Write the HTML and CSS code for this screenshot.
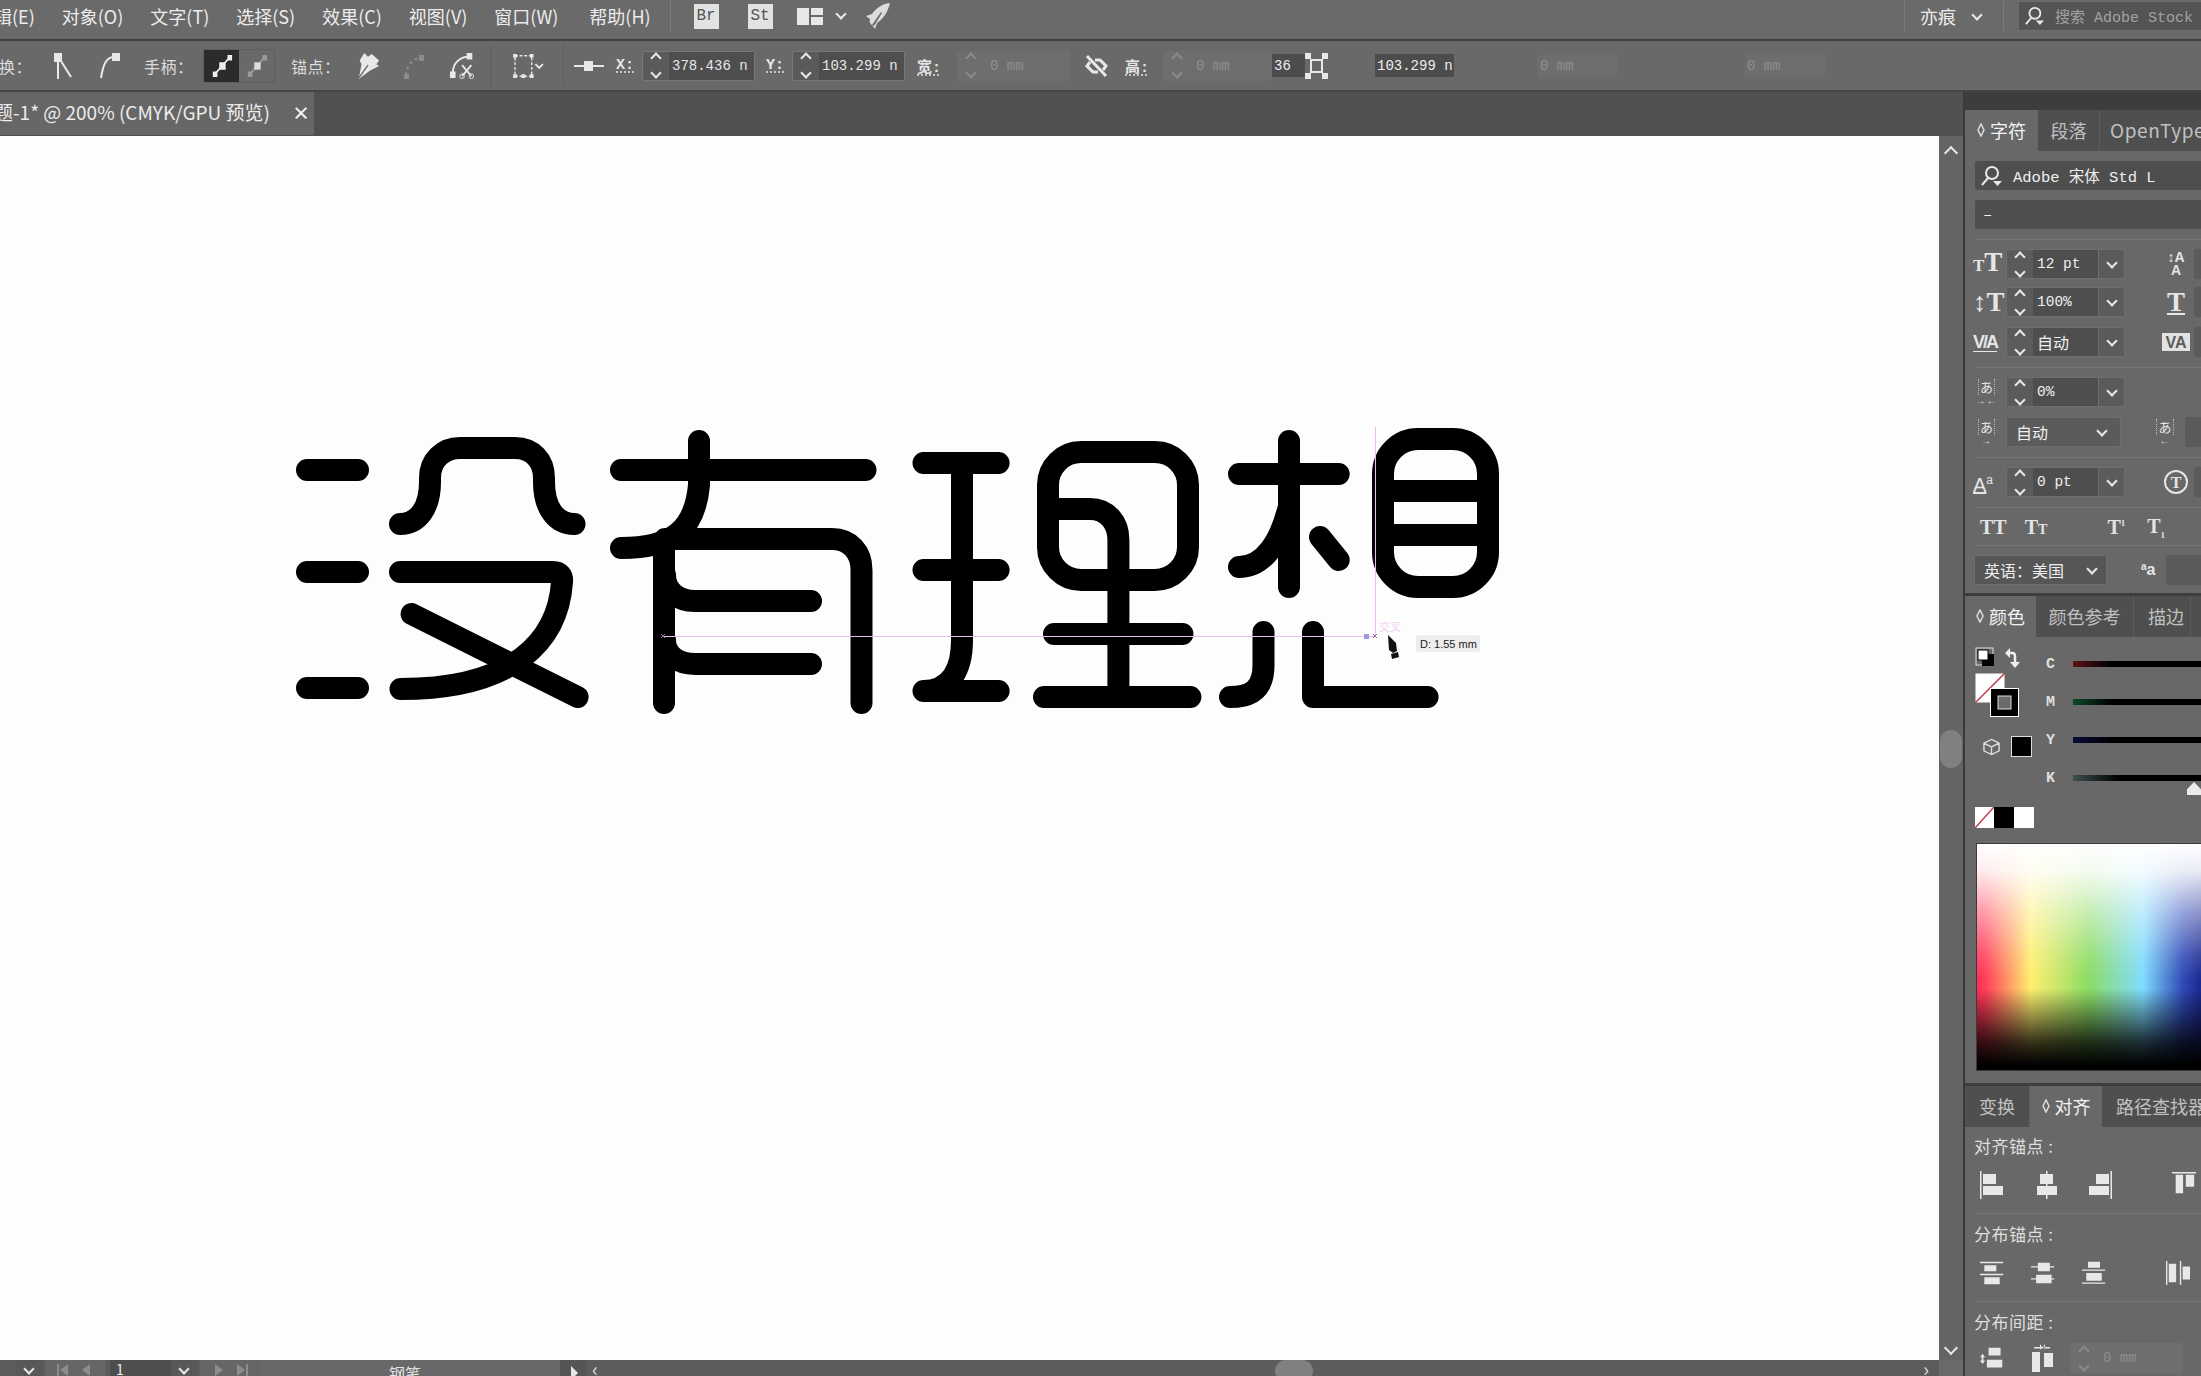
FILE: index.html
```html
<!DOCTYPE html>
<html lang="zh">
<head>
<meta charset="utf-8">
<title>Illustrator</title>
<link rel="stylesheet" href="styles.css">
</head>
<body>
<header class="menubar">
  <nav class="menus">
    <span class="menu first">辑(E)</span><span class="menu">对象(O)</span><span class="menu">文字(T)</span><span class="menu">选择(S)</span><span class="menu">效果(C)</span><span class="menu">视图(V)</span><span class="menu">窗口(W)</span><span class="menu last">帮助(H)</span>
  </nav>
  <i class="vsep vsep-menu"></i>
  <span class="appbadge">Br</span>
  <span class="appbadge badge-st">St</span>
  <svg class="layout-ico" viewBox="0 0 26 17"><path fill="#e8e8e8" d="M0 0h12v17H0zM14 0h12v7H14zM14 9h12v8H14z"/></svg>
  <i class="chev chev-menu"></i>
  <svg class="rocket" viewBox="0 0 26 26"><path fill="#dcdcdc" d="M25 0C17 1 11 5 7 11l-6 2 4 3c-1 3 0 5 2 6l3 4 2-6c6-4 11-11 13-20z"/><path fill="#6a6a6a" d="M7 22 16 9l1 1-8 13z"/></svg>
  <div class="menu-right">
    <i class="vsep"></i>
    <span class="user">亦痕</span>
    <i class="chev chev-user"></i>
    <i class="vsep vsep-user"></i>
    <div class="stocksearch">
      <svg class="search-ico" viewBox="0 0 22 22"><circle cx="12" cy="8" r="6" fill="none" stroke="#e8e8e8" stroke-width="2"/><path stroke="#e8e8e8" stroke-width="2" d="M8 13 2 20"/><path fill="#e8e8e8" d="M13 16h9l-4.500 5z"/></svg>
      <span class="stock-text">搜索 Adobe Stock</span>
    </div>
  </div>
</header>

<div class="ctlbar">
  <span class="lbl w36 cut">换：</span>
  <svg class="cicon ml18 w20" viewBox="0 0 20 26"><path fill="#e8e8e8" d="M1 0h8v9H6v17H4V9H1z"/><path stroke="#e8e8e8" stroke-width="2" d="M8 8l10 16"/></svg>
  <svg class="cicon ml25 w22" viewBox="0 0 22 26"><path fill="#e8e8e8" d="M14 0h8v8h-8z"/><path fill="none" stroke="#e8e8e8" stroke-width="2" d="M15 4C8 5 5 12 3 25"/></svg>
  <span class="lbl ml24 w50">手柄：</span>
  <div class="btngroup ml9">
    <span class="gbtn on"><svg viewBox="0 0 24 24"><path stroke="#eee" stroke-width="2" d="M4 21 20 3"/><path fill="#eee" d="M9 8h7v8H9zM2 18h5v6H2zM18 0h5v6h-5z"/></svg></span>
    <span class="gbtn"><svg viewBox="0 0 24 24"><path stroke="#999" stroke-width="2" d="M4 21 20 3"/><path fill="#ddd" d="M9 8h7v8H9z"/><path fill="#999" d="M2 18h5v6H2zM18 0h5v6h-5z"/></svg></span>
  </div>
  <span class="lbl ml16 w48">锚点：</span>
  <svg class="cicon ml16 w26" viewBox="0 0 26 28"><path fill="#e8e8e8" d="M9 0 13 4 17 1 25 8 22 12 25 14 15 19 3 28 6 12 4 8zM8 0"/><path stroke="#686868" stroke-width="1.500" d="M3 27 13 13"/></svg>
  <svg class="cicon ml22 w22" viewBox="0 0 22 26"><path fill="none" stroke="#8c8c8c" stroke-width="2" stroke-dasharray="3 3" d="M3 22C4 12 9 6 18 5"/><path fill="#8c8c8c" d="M16 2h5v6h-5zM1 21h5v5H1z"/></svg>
  <svg class="cicon ml24 w28" viewBox="0 0 28 28"><path fill="none" stroke="#e8e8e8" stroke-width="2" d="M3 22C3 12 9 5 19 4"/><path fill="#e8e8e8" d="M18 0h6v7h-6zM0 20h6v7H0z"/><path stroke="#e8e8e8" stroke-width="2" d="m13 13 10 12M23 13 13 25"/><circle cx="13" cy="25" r="2.500" fill="none" stroke="#e8e8e8"/><circle cx="23" cy="25" r="2.500" fill="none" stroke="#e8e8e8"/></svg>
  <i class="vsep ctl-sep ml13"></i>
  <svg class="cicon ml20 w34" viewBox="0 0 34 28"><rect x="3" y="3" width="18" height="22" fill="none" stroke="#e8e8e8" stroke-width="1.500" stroke-dasharray="3 2"/><path fill="#e8e8e8" d="M1 1h4v4H1zM19 1h4v4h-4zM1 23h4v4H1zM19 23h4v4h-4zM10 23h4v4h-4z"/><path fill="none" stroke="#e8e8e8" stroke-width="2" d="m25 12 4 4 4-4"/></svg>
  <i class="vsep ctl-sep ml18"></i>
  <svg class="cicon ml10 w30" viewBox="0 0 30 12"><path fill="#e8e8e8" d="M0 5h10V1h9v4h11v2H19v4h-9V7H0z"/></svg>
  <span class="lbl-u ml12 w17">X:</span>
  <div class="numfield ml9"><span class="spin"><i class="chev up"></i><i class="chev"></i></span><span class="numval">378.436 n</span></div>
  <span class="lbl-u ml11 w16">Y:</span>
  <div class="numfield ml10"><span class="spin"><i class="chev up"></i><i class="chev"></i></span><span class="numval">103.299 n</span></div>
  <span class="lbl-u ml12 w32">宽:</span>
  <div class="numfield dis ml8"><span class="spin"><i class="chev up"></i><i class="chev"></i></span><span class="numval">0 mm</span></div>
  <svg class="cicon ml15 w23" viewBox="0 0 23 22"><path fill="none" stroke="#e8e8e8" stroke-width="3" d="M5 7 2 11l6 6h5M18 15l3-4-6-6h-5M2 1l19 20"/></svg>
  <span class="lbl-u ml17 w30">高:</span>
  <div class="numfield dis w109 ml8"><span class="spin"><i class="chev up"></i><i class="chev"></i></span><span class="numval">0 mm</span></div>
  <span class="darkval w33">36 </span>
  <svg class="cicon w23" viewBox="0 0 23 26"><rect x="6" y="7" width="11" height="12" fill="none" stroke="#e8e8e8" stroke-width="2"/><path fill="#e8e8e8" d="M0 0h6v6H0zM17 0h6v6h-6zM0 20h6v6H0zM17 20h6v6h-6z"/></svg>
  <span class="darkval ml47 w79">103.299 n</span>
  <span class="ghostval ml84 w79">0 mm</span>
  <span class="ghostval ml128 w80">0 mm</span>
</div>

<div class="work">
  <div class="docarea">
    <div class="tabstrip">
      <div class="doctab"><span class="doctitle">题-1* @ 200% (CMYK/GPU 预览)</span><span class="docclose">×</span></div>
    </div>
    <div class="docbody">
      <main class="canvas">
        <svg class="art" viewBox="0 136 1939 1224" role="img" aria-label="没有理想">
          <g class="letter">
            <path d="M307 470H358M307 572H358M307 688H358"/>
            <path d="M400 524C418 524 430 508 430 482V478C430 460 443 448 460 448H515C532 448 544 460 544 478V482C544 508 556 524 574.500 524"/>
            <path d="M400 572H553Q563 572 562 582C558 640 515 689 400.500 689"/>
            <path d="M411.600 614 577.600 697"/>
            <path d="M621 470H865.500"/>
            <path d="M699 441V485C695 530 672 548 621 548"/>
            <path d="M664 550V703"/>
            <path d="M665 539H832C850 539 861.500 552 861.500 570V703"/>
            <path d="M665 575C665 591 678 601 695 601H811M665 640C665 655 678 664 695 664H811"/>
            <path d="M923.500 463H998.600M923.500 570H998.600"/>
            <path d="M962 463V640C962 670 950 691 923.500 691H998.600"/>
            <rect x="1048" y="452" width="140" height="128" rx="33" ry="33"/>
            <path d="M1048 509H1090C1107 509 1118.400 522 1118.400 540V697"/>
            <path d="M1054 634H1182.500M1044 697H1190.400"/>
            <path d="M1239 474H1338.700M1289 441V587"/>
            <path d="M1288 510C1280 540 1265 567 1239 567"/>
            <path d="M1320 537 1338.700 560"/>
            <rect x="1383" y="439" width="105" height="148" rx="35" ry="35"/>
            <path d="M1383 491H1488M1383 535H1488"/>
            <path d="M1263.500 632V665C1263.500 690 1250 697 1230 697"/>
            <path d="M1313 632V697H1427.600"/>
          </g>
          <path class="guide" d="M663 636.500H1376M1375.500 427V636"/>
          <rect class="anchor" x="1364" y="634" width="5" height="5"/>
          <path class="cross" d="m661 634 4 4m0-4-4 4M1373 634l4 4m0-4-4 4"/>
          <text class="hint" x="1379" y="631">交叉</text>
          <path class="pen" d="M1388 635l8 8 1 8-4 2-4-3zM1391 654l7-2 1 5-7 2z"/>
          <rect class="tip" x="1416" y="635" width="64" height="17" rx="3"/>
          <text class="tiptext" x="1420" y="648">D: 1.55 mm</text>
        </svg>
      </main>
      <aside class="vscroll">
        <i class="chev up sc-up"></i>
        <i class="vthumb"></i>
        <i class="chev sc-down"></i>
      </aside>
    </div>
    <footer class="status">
      <span class="st-a"><i class="chev"></i></span>
      <span class="st-b">
        <svg viewBox="0 0 40 14"><path fill="#8c8c8c" d="M2 1h2v12H2zM13 1v12L5 7zM35 1v12l-8-6z"/></svg>
      </span>
      <span class="st-input">1</span>
      <span class="st-a st-dark"><i class="chev"></i></span>
      <span class="st-b st-b2">
        <svg viewBox="0 0 40 14"><path fill="#8c8c8c" d="M5 1v12l8-6zM27 1v12l8-6zM36 1h2v12h-2z"/></svg>
      </span>
      <span class="st-tool">钢笔</span>
      <span class="st-arrow"><svg viewBox="0 0 10 16"><path fill="#e6e6e6" d="M1 0v16l8-8z"/></svg></span>
      <div class="hscroll">
        <span class="hs-l">‹</span>
        <i class="hthumb"></i>
        <span class="hs-r">›</span>
      </div>
      <span class="st-corner"></span>
    </footer>
  </div>

  <div class="dock">
    <section class="panel p-char">
      <div class="ptabs">
        <span class="ptab on w73"><svg class="updown" viewBox="0 0 8 14"><path fill="none" stroke="#ddd" stroke-width="1.500" d="M4 1 7 7 4 13 1 7z"/></svg>字符</span><span class="ptab w62">段落</span><span class="ptab wide">OpenType</span>
      </div>
      <div class="pbody">
        <div class="field f-font">
          <svg class="search-ico" viewBox="0 0 22 22"><circle cx="12" cy="8" r="6" fill="none" stroke="#e8e8e8" stroke-width="2"/><path stroke="#e8e8e8" stroke-width="2" d="M8 13 2 20"/><path fill="#e8e8e8" d="M13 16h9l-4.500 5z"/></svg>
          <span class="mono">Adobe 宋体 Std L</span>
        </div>
        <div class="field f-style"><span class="mono">–</span></div>
        <hr class="sep">
        <div class="row">
          <span class="ri big-t"><small>T</small>T</span>
          <div class="combo"><span class="spin"><i class="chev up"></i><i class="chev"></i></span><span class="cval mono">12 pt</span><span class="cdrop"><i class="chev"></i></span></div>
          <span class="ri2 stack">↕A<br>A</span><span class="stub"></span>
        </div>
        <div class="row">
          <span class="ri big-t">↕T</span>
          <div class="combo"><span class="spin"><i class="chev up"></i><i class="chev"></i></span><span class="cval mono">100%</span><span class="cdrop"><i class="chev"></i></span></div>
          <span class="ri2 big-t under">T</span><span class="stub"></span>
        </div>
        <div class="row row-mt">
          <span class="ri va">V/A</span>
          <div class="combo"><span class="spin"><i class="chev up"></i><i class="chev"></i></span><span class="cval">自动</span><span class="cdrop"><i class="chev"></i></span></div>
          <span class="ri2 va-box">VA</span><span class="stub"></span>
        </div>
        <hr class="sep">
        <div class="row">
          <span class="ri kana"><b>あ</b><em>→←</em></span>
          <div class="combo"><span class="spin"><i class="chev up"></i><i class="chev"></i></span><span class="cval mono">0%</span><span class="cdrop"><i class="chev"></i></span></div>
        </div>
        <div class="row row-mt">
          <span class="ri kana"><b>あ</b><em>→</em></span>
          <div class="select s-auto"><span>自动</span><i class="chev"></i></div>
          <span class="ri2 kana kana-r"><b>あ</b><em>←</em></span><span class="stub"></span>
        </div>
        <hr class="sep">
        <div class="row">
          <span class="ri aa"><u>A</u><sup>a</sup></span>
          <div class="combo"><span class="spin"><i class="chev up"></i><i class="chev"></i></span><span class="cval mono">0 pt</span><span class="cdrop"><i class="chev"></i></span></div>
          <span class="ri2 rot">T</span><span class="stub"></span>
        </div>
        <hr class="sep">
        <div class="types"><span>TT</span><span class="ty2">T<small>T</small></span><span class="ty3">T<sup>1</sup></span><span class="ty4">T<sub>1</sub></span></div>
        <hr class="sep sep-tight">
        <div class="row">
          <div class="select s-lang"><span>英语：美国</span><i class="chev"></i></div>
          <span class="ri3"><small>a</small>a</span><span class="stub stub-wide"></span>
        </div>
      </div>
    </section>

    <section class="panel p-color">
      <div class="ptabs">
        <span class="ptab on w71"><svg class="updown" viewBox="0 0 8 14"><path fill="none" stroke="#ddd" stroke-width="1.500" d="M4 1 7 7 4 13 1 7z"/></svg>颜色</span><span class="ptab w98">颜色参考</span><span class="ptab push">描边</span>
      </div>
      <div class="colorbody">
        <div class="colortop">
          <div class="fillcol">
            <svg class="fillmini" viewBox="0 0 48 22"><rect x="1" y="1" width="17" height="17" fill="none" stroke="#ddd"/><rect x="7" y="7" width="12" height="12" fill="#000"/><rect x="3" y="3" width="10" height="10" fill="#fff" stroke="#000"/><path fill="none" stroke="#eee" stroke-width="2.500" d="M31 6h6q3 0 3 3v8"/><path fill="#eee" d="m35 1-5 5 5 5zM35 15l5 6 5-6z"/></svg>
            <div class="fillstroke">
              <svg viewBox="0 0 44 44"><rect x=".5" y=".5" width="29" height="29" fill="#fff"/><path stroke="#c0394b" stroke-width="1.500" d="M0 30 30 0"/><rect x="15.500" y="15.500" width="28" height="28" fill="#000" stroke="#fff"/><rect x="23" y="23" width="13" height="13" fill="#6a6a6a" stroke="#ddd"/></svg>
            </div>
            <div class="modes">
              <svg viewBox="0 0 18 18"><path fill="none" stroke="#ddd" stroke-width="1.500" d="M9 1 17 5v8l-8 4-8-4V5zM1 5l8 4 8-4M9 9v8"/></svg>
              <span class="blk"></span>
            </div>
          </div>
          <div class="sliders">
            <div class="sl"><b>C</b><i class="bar bar-c"></i></div>
            <div class="sl"><b>M</b><i class="bar bar-m"></i></div>
            <div class="sl"><b>Y</b><i class="bar bar-y"></i></div>
            <div class="sl"><b>K</b><i class="bar bar-k"></i><i class="thumb"></i></div>
          </div>
        </div>
        <div class="swatches"><svg viewBox="0 0 19 21" preserveAspectRatio="none"><rect width="19" height="21" fill="#fff"/><path stroke="#c0394b" stroke-width="1.500" d="M0 21 19 0"/></svg><i class="sw-k"></i><i class="sw-w"></i></div>
        <div class="spectrum"></div>
      </div>
    </section>

    <section class="panel p-align">
      <div class="ptabs">
        <span class="ptab w65">变换</span><span class="ptab on w72"><svg class="updown" viewBox="0 0 8 14"><path fill="none" stroke="#ddd" stroke-width="1.500" d="M4 1 7 7 4 13 1 7z"/></svg>对齐</span><span class="ptab push">路径查找器</span>
      </div>
      <div class="alignbody">
        <div class="alabel">对齐锚点 :</div>
        <div class="airow">
          <svg class="ai" viewBox="0 0 24 28"><path fill="#e8e8e8" d="M0 0h1.500v28H0zM3 3h13v10H3zM3 15h20v9H3z"/></svg>
          <svg class="ai a2" viewBox="0 0 24 28"><path fill="#e8e8e8" d="M11 0h1.500v28H11zM5 3h13v10H5zM2 15h20v9H2z"/></svg>
          <svg class="ai a3" viewBox="0 0 24 28"><path fill="#e8e8e8" d="M22.500 0h1.500v28h-1.500zM8 3h13v10H8zM1 15h20v9H1z"/></svg>
          <svg class="ai a4" viewBox="0 0 26 28"><path fill="#e8e8e8" d="M0 0h26v1.500H0zM4 3h8v20H4zM15 3h9v13h-9z"/></svg>
        </div>
        <hr class="sep asep">
        <div class="alabel">分布锚点 :</div>
        <div class="airow">
          <svg class="ai" viewBox="0 0 28 26"><path fill="#e8e8e8" d="M0 0h27v1.500H0zM5 4h14v7H5zM0 14h27v1.500H0zM5 18h18v8H5z"/></svg>
          <svg class="ai a2b" viewBox="0 0 28 26"><path fill="#e8e8e8" d="M0 5h27v1.500H0zM8 1h14v10H8zM0 19h27v1.500H0zM6 15h18v10H6z"/></svg>
          <svg class="ai a3b" viewBox="0 0 28 26"><path fill="#e8e8e8" d="M7 0h14v7H7zM0 9h27v1.500H0zM5 13h18v9H5zM0 24h27v1.500H0z"/></svg>
          <svg class="ai a4b" viewBox="0 0 26 26"><path fill="#e8e8e8" d="M0 0h1.500v26H0zM3 3h8v20H3zM15 0h1.500v26H15zM18 6h8v14h-8z"/></svg>
        </div>
        <hr class="sep asep">
        <div class="alabel">分布间距 :</div>
        <div class="airow airow-last">
          <svg class="ai" viewBox="0 0 28 26"><path fill="#e8e8e8" d="M10 1h14v9H10zM8 15h18v9H8zM3 8 6 12H0zM3 20 6 16H0zM2 12h2v4H2z"/></svg>
          <svg class="ai a2c" viewBox="0 0 24 28"><path fill="#e8e8e8" d="M1 8h8v20H1zM13 9h9v14h-9zM3 3h16v1.500H3zM9 0l2 3-2 3zM14 0l-2 3 2 3z"/></svg>
          <div class="numfield dis gapfield"><span class="spin"><i class="chev up"></i><i class="chev"></i></span><span class="numval">0 mm</span></div>
        </div>
      </div>
    </section>
  </div>
</div>
</body>
</html>
```

FILE: styles.css
```css
*{box-sizing:border-box}
html,body{margin:0;padding:0}
body{width:2201px;height:1376px;overflow:hidden;display:flex;flex-direction:column;background:#696969;color:#e4e4e4;font-family:"Noto Sans CJK SC","Noto Sans",sans-serif;font-size:16px}
i{display:block;font-style:normal}
svg{display:block;flex:none}

.chev{width:8px;height:8px;border-right:2px solid #e8e8e8;border-bottom:2px solid #e8e8e8;transform:rotate(45deg);flex:none}
.chev.up{transform:rotate(-135deg)}
.vsep{width:1px;height:30px;background:#7c7c7c;flex:none}

/* menu bar */
.menubar{height:41px;flex:none;display:flex;align-items:center;background:#6a6a6a;border-bottom:2px solid #404040;padding-bottom:7px;overflow:hidden}
.menus{display:flex;gap:27px;font-size:18px;color:#ececec;flex:none}
.menu{white-space:nowrap}
.menu.first{margin-left:-6px}
.menu.last{margin-left:4px}
.vsep-menu{margin-left:19px}
.appbadge{width:25px;height:25px;margin-left:23px;background:#e2e2e2;color:#555;font:16px "Liberation Mono",monospace;display:flex;align-items:center;justify-content:center;flex:none}
.badge-st{margin-left:29px}
.layout-ico{width:26px;height:17px;margin-left:24px}
.chev-menu{margin-left:14px;margin-top:-5px}
.rocket{width:26px;height:26px;margin-left:20px}
.menu-right{margin-left:auto;display:flex;align-items:center;height:100%}
.user{font-size:18px;margin-left:15px;color:#eee}
.chev-user{margin-left:17px;margin-top:-2px}
.vsep-user{margin-left:22px}
.stocksearch{width:183px;height:30px;margin-left:14px;background:#545454;border:1px solid #6e6e6e;border-right:0;display:flex;align-items:center;padding-left:5px;overflow:hidden}
.stocksearch .search-ico{width:20px;height:20px}
.stock-text{font:15px "Liberation Mono","Noto Sans CJK SC",monospace;color:#a2a2a2;margin-left:11px;white-space:nowrap}

/* control bar */
.ctlbar{height:51px;flex:none;display:flex;align-items:center;background:#696969;border-bottom:2px solid #454545;overflow:hidden;white-space:nowrap}
.lbl{font-size:16px;color:#dcdcdc;flex:none;letter-spacing:.5px}
.cut{margin-left:-1px}
.lbl-u{font:bold 15px "Liberation Mono","Noto Sans CJK SC",monospace;color:#e6e6e6;text-decoration:underline dotted;text-underline-offset:3px;flex:none}
.cicon{height:26px;flex:none}
.ctl-sep{height:42px;background:#5e5e5e}
.w16{width:16px}.w17{width:17px}.w20{width:20px}.w22{width:22px}.w23{width:23px}.w26{width:26px}.w28{width:28px}.w30{width:30px}.w32{width:32px}.w33{width:33px}.w34{width:34px}.w36{width:36px}.w48{width:48px}.w50{width:50px}.w79{width:79px}.w80{width:80px}
.ml8{margin-left:8px}.ml9{margin-left:9px}.ml10{margin-left:10px}.ml11{margin-left:11px}.ml12{margin-left:12px}.ml13{margin-left:13px}.ml15{margin-left:15px}.ml16{margin-left:16px}.ml17{margin-left:17px}.ml18{margin-left:18px}.ml20{margin-left:20px}.ml22{margin-left:22px}.ml24{margin-left:24px}.ml25{margin-left:25px}.ml47{margin-left:47px}.ml84{margin-left:84px}.ml128{margin-left:128px}
.btngroup{width:72px;height:34px;display:flex;border:1px solid #5e5e5e;border-radius:2px;flex:none}
.gbtn{flex:1;display:flex;align-items:center;justify-content:center}
.gbtn svg{width:22px;height:22px}
.gbtn.on{background:#2b2b2b}
.numfield{width:113px;height:30px;display:flex;background:#5a5a5a;border:1px solid #777;border-radius:2px;flex:none;overflow:hidden}
.spin{width:26px;flex:none;display:flex;flex-direction:column;align-items:center;justify-content:center;gap:7px}
.spin .chev{width:8px;height:8px;border-width:2px}
.numval{flex:1;background:#4e4e4e;font:14px "Liberation Mono",monospace;color:#e6e6e6;display:flex;align-items:center;padding-left:3px;overflow:hidden;white-space:nowrap}
.numfield.dis{background:#6e6e6e;border-color:#6e6e6e}
.numfield.dis .numval{background:#6e6e6e;color:#8e8e8e;padding-left:6px}
.numfield.dis .chev{border-color:#8a8a8a}
.w109{width:109px}
.darkval{height:23px;background:#4c4c4c;font:14px "Liberation Mono",monospace;color:#eee;display:flex;align-items:center;padding-left:2px;flex:none;white-space:nowrap}
.ghostval{height:22px;background:#6e6e6e;color:#8e8e8e;font:14px "Liberation Mono",monospace;display:flex;align-items:center;padding-left:2px;flex:none}

/* workspace */
.work{flex:1;min-height:0;display:flex}
.docarea{width:1963px;flex:none;display:flex;flex-direction:column}
.tabstrip{height:44px;flex:none;background:#505050}
.doctab{width:314px;height:43px;background:#666;display:flex;align-items:center;padding-bottom:4px;overflow:hidden}
.doctitle{font-size:19px;color:#ececec;white-space:nowrap;margin-left:-6px;flex:none}
.docclose{margin-left:22px;font-size:18px;color:#f4f4f4;font-weight:bold}
.docbody{flex:1;min-height:0;display:flex}
.canvas{flex:1;min-width:0;background:#fdfdfd}
.art{width:1939px;height:1224px}
.letter{fill:none;stroke:#000;stroke-width:22;stroke-linecap:round;stroke-linejoin:round}
.guide{stroke:#f0b8f0;stroke-width:1;fill:none}
.anchor{fill:#9a9ae0}
.cross{stroke:#8a6a9a;stroke-width:1;fill:none}
.hint{font-size:11px;fill:#f4d0f4;font-family:"Noto Sans CJK SC",sans-serif}
.pen{fill:#111}
.tip{fill:#ededed}
.tiptext{font:11px "Liberation Sans",sans-serif;fill:#222}
.vscroll{width:24px;flex:none;background:#646464;display:flex;flex-direction:column;align-items:center}
.sc-up{margin-top:12px;width:10px;height:10px}
.vthumb{width:22px;height:38px;margin-top:572px;background:#808080;border-radius:11px}
.sc-down{margin-top:575px;width:10px;height:10px}
.status{height:16px;flex:none;display:flex;background:#5c5c5c;overflow:hidden}
.st-a{width:26px;margin-left:16px;background:#585858;display:flex;justify-content:center;padding-top:5px}
.st-a .chev{width:8px;height:8px}
.st-dark{margin-left:0}
.st-b{width:60px;margin-left:3px;background:#666;padding-top:3px;padding-left:0}
.st-b svg{width:40px;height:14px;margin-left:10px}
.st-b2{margin-left:3px}
.st-input{width:61px;margin-left:5px;background:#4e4e4e;font-size:14px;line-height:18px;padding-left:6px;color:#eee}
.st-tool{width:300px;background:#686868;text-align:center;font-size:16px;line-height:26px;color:#e4e4e4;padding-right:10px}
.st-arrow{width:26px;background:#555;padding:6px 0 0 10px}
.st-arrow svg{width:9px;height:14px}
.hscroll{flex:1;display:flex;background:#5c5c5c;padding-left:6px;color:#ddd;font-size:20px;line-height:18px}
.hthumb{width:38px;height:22px;margin-left:677px;background:#808080;border-radius:16px}
.hs-r{margin-left:610px}
.st-corner{width:24px;background:#6a6a6a}

/* dock */
.dock{flex:1;min-width:0;background:#3d3d3d;padding-top:18px;display:flex;flex-direction:column;gap:3px;border-left:2px solid #3a3a3a;overflow:hidden}
.panel{background:#686868;width:236px;flex:none;overflow:hidden}
.p-char{height:483px}
.p-color{height:487px}
.p-align{flex:1}
.ptabs{height:41px;display:flex;background:#4f4f4f;font-size:18px;color:#c0c0c0;white-space:nowrap;padding-bottom:0}
.ptab{display:flex;align-items:center;justify-content:center;padding:0 6px 2px;border-right:1px solid #5c5c5c;flex:none}
.ptab.on{background:#686868;color:#f2f2f2;border-right:0}
.ptab.wide{padding-left:10px;font-size:19px;letter-spacing:.6px}
.ptab.push{padding-left:14px}
.updown{width:8px;height:14px;margin-right:5px;flex:none}
.w62{width:62px}.w65{width:65px}.w71{width:71px}.w72{width:72px}.w73{width:73px}.w98{width:98px}
.pbody{padding:10px 0 0 10px}
.field{height:29px;width:300px;background:#4e4e4e;border-radius:2px;display:flex;align-items:center;padding-left:4px;white-space:nowrap}
.field .search-ico{width:24px;height:22px;margin-right:10px}
.f-style{margin-top:10px;padding-left:8px}
.mono{font:15.5px "Liberation Mono","Noto Sans CJK SC",monospace;color:#eee;white-space:pre}
.sep{border:0;height:1px;margin:10px 0 9px;background:#757575;width:300px}
.sep-tight{margin:8px 0 9px}
.row{height:30px;display:flex;align-items:center}
.row + .row{margin-top:8px}
.row + .row.row-mt{margin-top:10px}
.ri{width:31px;flex:none;font:bold 27px "Liberation Serif",serif;color:#e6e6e6;white-space:nowrap;line-height:30px;margin-left:-2px;margin-right:2px}
.ri small{font-size:17px}
.ri2{width:28px;margin-left:37px;flex:none;text-align:center;color:#e6e6e6;font:bold 27px "Liberation Serif",serif;line-height:30px}
.stack{font:bold 14px/13px "Liberation Sans",sans-serif}
.under{text-decoration:underline;line-height:26px}
.va{font:bold 18px "Liberation Sans",sans-serif;letter-spacing:-2px;text-decoration:underline;text-underline-offset:3px}
.va-box{font:bold 16px/20px "Liberation Sans",sans-serif;background:#e2e2e2;color:#5a5a5a;height:18px}
.kana{display:flex;flex-direction:column;align-items:center;font:10px/11px "Liberation Sans",sans-serif;padding-right:4px}
.kana b{font:13px/16px "Noto Sans CJK JP",sans-serif;border:1px dotted #bbb;border-width:0 1px;padding:0 1px}
.kana em{font-style:normal;letter-spacing:1px}
.kana-r{margin-left:32px}
.aa{font:20px/30px "Liberation Sans",sans-serif}
.aa sup{font-size:12px}
.rot{width:24px;height:24px;line-height:22px;border:2px solid #e6e6e6;border-radius:50%;font-size:16px;margin-left:39px;margin-right:2px}
.combo{width:119px;height:30px;display:flex;background:#5b5b5b;border:1px solid #6e6e6e;border-radius:2px;flex:none}
.cval{width:65px;background:#4e4e4e;display:flex;align-items:center;padding-left:4px;font-size:16px;color:#eee}
.cval.mono{font-size:14.5px}
.cdrop{flex:1;display:flex;justify-content:center;align-items:center;padding-bottom:3px;border-left:1px solid #6e6e6e}
.stub{width:40px;height:30px;margin-left:4px;background:#5b5b5b;flex:none;border-radius:2px}
.select{height:30px;background:#5b5b5b;border:1px solid #6e6e6e;border-radius:2px;display:flex;align-items:center;justify-content:space-between;flex:none;font-size:17px;color:#eee;padding:0 14px 0 9px}
.select .chev{margin-top:-3px}
.s-auto{width:115px;font-size:16px}
.s-lang{width:133px;margin-left:-1px;font-size:16px;padding:0 10px 0 9px;background:#565656}
.types{height:20px;display:flex;align-items:center;font:bold 20px "Liberation Serif",serif;color:#e4e4e4;padding-left:5px}
.types small{font-size:14px}
.types sup,.types sub{font-size:9px}
.ty2{margin-left:18px}
.ty3{margin-left:60px}
.ty4{margin-left:22px}
.ri3{margin-left:34px;width:20px;font:bold 16px "Liberation Sans",sans-serif;color:#e6e6e6}
.ri3 small{font-size:10px;vertical-align:top}
.stub-wide{margin-left:11px;width:80px}

/* colour */
.colorbody{padding:10px 0 0 10px}
.colortop{display:flex;height:158px}
.fillcol{width:62px;flex:none}
.fillmini{width:48px;height:22px}
.fillstroke{margin-top:4px}
.fillstroke svg{width:44px;height:44px}
.modes{display:flex;align-items:center;margin-top:19px;padding-left:8px;gap:11px}
.modes svg{width:17px;height:18px}
.blk{width:21px;height:21px;background:#000;border:1px solid #ddd}
.sliders{flex:1;padding:6px 0 0 9px;display:flex;flex-direction:column;gap:16px;position:relative}
.sl{height:22px;display:flex;align-items:center;position:relative}
.sl b{width:27px;font:bold 15px "Liberation Mono",monospace;color:#e0e0e0}
.bar{flex:1;height:6px}
.bar-c{background:linear-gradient(90deg,#5c1212,#000 30%)}
.bar-m{background:linear-gradient(90deg,#0d4a28,#000 30%)}
.bar-y{background:linear-gradient(90deg,#0b0b3c,#000 30%)}
.bar-k{background:linear-gradient(90deg,#3f5050,#000 35%)}
.thumb{position:absolute;right:0;top:15px;width:14px;height:13px;background:#ececec;clip-path:polygon(50% 0,100% 55%,100% 100%,0 100%,0 55%)}
.swatches{display:flex;height:21px;width:59px;margin-top:2px}
.swatches svg{width:19px;height:21px}
.swatches i{width:20px}
.sw-k{background:#000}
.sw-w{background:#fff}
.spectrum{width:226px;height:228px;margin-top:15px;margin-left:1px;border:1px solid #3a3a3a;background:linear-gradient(to bottom,#fff 0,rgba(255,255,255,.9) 12%,rgba(255,255,255,.5) 30%,rgba(255,255,255,.12) 50%,rgba(255,255,255,0) 60%,rgba(0,0,0,0) 64%,rgba(0,0,0,.8) 88%,#000 98%),linear-gradient(to right,#ff2f55 0,#ff4058 4%,#ffef70 24%,#8bdc63 50%,#7fdcff 74%,#2f49b8 92%,#1a2a90 100%)}

/* align */
.alignbody{padding:7px 0 0 9px}
.alabel{font-size:17px;line-height:24px;color:#dedede;letter-spacing:.5px}
.airow{display:flex;align-items:center;height:28px;margin-top:13px;padding-left:6px}
.ai{width:24px;height:28px}
.a2{margin-left:31px}.a3{margin-left:29px}.a4{margin-left:60px}
.a2b{margin-left:27px}.a3b{margin-left:27px}.a4b{margin-left:60px}
.a2c{margin-left:27px}
.asep{margin:14px 0 8px}
.airow-last{margin-top:10px}
.gapfield{margin-left:15px;width:113px;height:30px}
```
